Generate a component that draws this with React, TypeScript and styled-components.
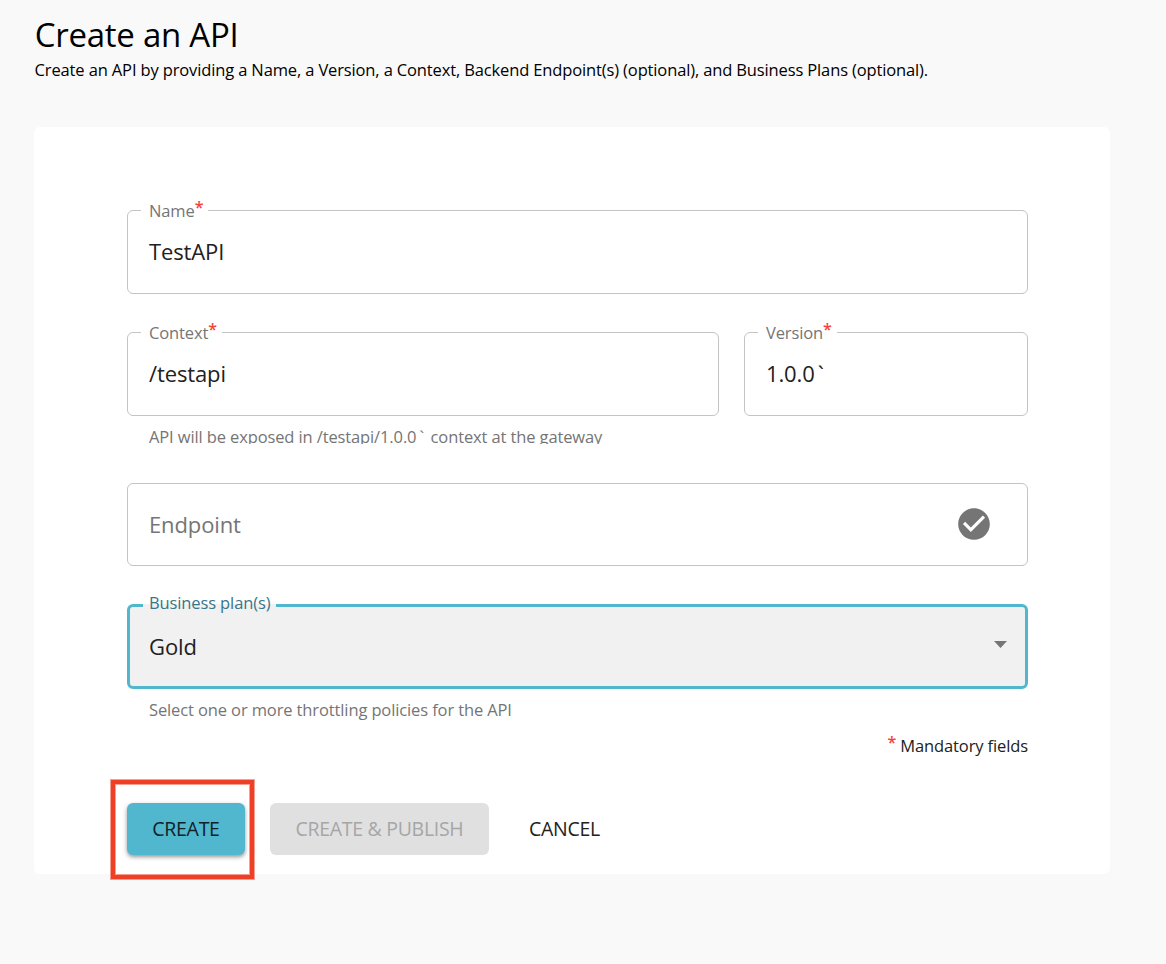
import React from "react";
import styled, { createGlobalStyle } from "styled-components";

const GlobalStyle = createGlobalStyle`
  *, *::before, *::after { box-sizing: border-box; }
  body {
    margin: 0;
    background: #f9f9f9;
    color: #000;
    font-family: "Open Sans", "Noto Sans", sans-serif;
  }
`;

const Page = styled.main`
  min-height: 964px;
  padding: 12px 56px 0 34px;
`;

const Title = styled.h1`
  margin: 0;
  padding-left: 0.7px;
  font-size: 33px;
  font-weight: 400;
  letter-spacing: -0.25px;
  line-height: 46px;
`;

const Subtitle = styled.p`
  margin: 0 0 45px;
  padding-left: 0.6px;
  font-size: 16.5px;
  letter-spacing: -0.137px;
  line-height: 24px;
  white-space: nowrap;
`;

const Card = styled.form`
  display: flex;
  flex-direction: column;
  height: 747px;
  padding: 83px 82px 0 93px;
  border-radius: 6px;
  background: #fff;
`;

const FieldRow = styled.div`
  display: grid;
  grid-template-columns: 592px 284px;
  column-gap: 25px;
  margin-top: 38px;
`;

const Field = styled.div<{ $focused?: boolean; $gap?: number; $height?: number }>`
  position: relative;
  display: flex;
  align-items: center;
  justify-content: space-between;
  height: ${(p) => p.$height ?? 84}px;
  margin-top: ${(p) => p.$gap ?? 0}px;
  padding: ${(p) => (p.$focused ? "0 18px 2px 19px" : "0 34px 2px 21px")};
  border: ${(p) => (p.$focused ? "3px solid #51b7ce" : "1px solid #c4c4c4")};
  border-radius: 6px;
  background: ${(p) => (p.$focused ? "#f1f1f1" : "#fff")};
`;

const Label = styled.label<{ $focused?: boolean }>`
  position: absolute;
  top: ${(p) => (p.$focused ? -16 : -12)}px;
  left: 13px;
  padding: 0 ${(p) => (p.$focused ? 6 : 5)}px 0 ${(p) => (p.$focused ? 6 : 8)}px;
  color: ${(p) => (p.$focused ? "#38758a" : "#757575")};
  font-size: 16.5px;
  letter-spacing: -0.12px;
  line-height: 24px;
  white-space: nowrap;

  &::before {
    content: "";
    position: absolute;
    top: ${(p) => (p.$focused ? 13 : 11)}px;
    left: 0;
    width: 100%;
    height: ${(p) => (p.$focused ? 3 : 1)}px;
    background: ${(p) => (p.$focused ? "#f1f1f1" : "#fff")};
  }
`;

const LabelText = styled.span`
  position: relative;
`;

const Star = styled.span`
  position: relative;
  top: -4px;
  color: #f44336;
  font-size: 16px;
  font-weight: 600;
`;

const Value = styled.span<{ $muted?: boolean }>`
  color: ${(p) => (p.$muted ? "#757575" : "#212121")};
  font-size: 22px;
  letter-spacing: -0.12px;
  line-height: 30px;
`;

const Tick = styled.span`
  margin: 0 2.5px 0 3px;
`;

const Helper = styled.div<{ $clip?: boolean }>`
  height: ${(p) => (p.$clip ? 17 : 24)}px;
  margin: ${(p) => (p.$clip ? "11px 0 0 22px" : "9px 0 0 22px")};
  overflow: hidden;
  color: #757575;
  font-size: 16.5px;
  letter-spacing: -0.12px;
  line-height: ${(p) => (p.$clip ? 20 : 24)}px;
`;

const Mandatory = styled.div`
  margin-top: 12px;
  color: #212121;
  font-size: 16.5px;
  letter-spacing: -0.12px;
  line-height: 24px;
  text-align: right;
`;

const Actions = styled.div`
  display: flex;
  gap: 25px;
  margin-top: 45px;
`;

const Button = styled.button<{ $kind: "primary" | "disabled" | "text" }>`
  width: ${(p) => ({ primary: 118, disabled: 219, text: 101 })[p.$kind]}px;
  height: 52px;
  padding: 0;
  border: 0;
  border-radius: 6px;
  background: ${(p) => ({ primary: "#51b7ce", disabled: "#e0e0e0", text: "transparent" })[p.$kind]};
  box-shadow: ${(p) => (p.$kind === "primary" ? "0 2px 5px rgba(0,0,0,.3), 0 2px 3px rgba(0,0,0,.14)" : "none")};
  color: ${(p) => ({ primary: "#0f2227", disabled: "#a6a6a6", text: "#212121" })[p.$kind]};
  font: 400 19.5px/52px "Open Sans", "Noto Sans", sans-serif;
  letter-spacing: -0.3px;
  text-transform: uppercase;
  white-space: nowrap;
`;

const Highlight = styled.div`
  position: relative;

  &::after {
    content: "";
    position: absolute;
    inset: -23px -9px -24px -16px;
    border: 4px solid #ee4026;
    box-shadow: 0 0 0 1px rgba(238, 64, 38, 0.5), inset 0 0 0 1px rgba(238, 64, 38, 0.5);
    pointer-events: none;
  }
`;

const FieldLabel = ({ text, required, focused }: { text: string; required?: boolean; focused?: boolean }) => (
  <Label $focused={focused}>
    <LabelText>{text}</LabelText>
    {required && <Star>*</Star>}
  </Label>
);

export default function App() {
  return (
    <>
      <GlobalStyle />
      <Page>
        <Title>Create an API</Title>
        <Subtitle>
          Create an API by providing a Name, a Version, a Context, Backend Endpoint(s) (optional), and Business Plans
          (optional).
        </Subtitle>
        <Card>
          <Field>
            <FieldLabel text="Name" required />
            <Value>TestAPI</Value>
          </Field>
          <FieldRow>
            <Field>
              <FieldLabel text="Context" required />
              <Value>/testapi</Value>
            </Field>
            <Field>
              <FieldLabel text="Version" required />
              <Value>
                1.0.0<Tick>`</Tick>
              </Value>
            </Field>
          </FieldRow>
          <Helper $clip>
            API will be exposed in /testapi/1.0.0<Tick>`</Tick> context at the gateway
          </Helper>
          <Field $gap={39} $height={83}>
            <Value $muted>Endpoint</Value>
            <svg width="38" height="38" viewBox="0 0 24 24" fill="#757575">
              <path d="M12 2C6.48 2 2 6.48 2 12s4.48 10 10 10 10-4.48 10-10S17.52 2 12 2zm-2 15l-5-5 1.41-1.41L10 14.17l7.59-7.59L19 8l-9 9z" />
            </svg>
          </Field>
          <Field $focused $gap={38} $height={85}>
            <FieldLabel text="Business plan(s)" focused />
            <Value>Gold</Value>
            <svg width="13" height="10" viewBox="0 0 13 10" fill="#757575">
              <path d="M0 0h13L6.5 7z" />
            </svg>
          </Field>
          <Helper>Select one or more throttling policies for the API</Helper>
          <Mandatory>
            <Star>*</Star> Mandatory fields
          </Mandatory>
          <Actions>
            <Highlight>
              <Button type="button" $kind="primary">Create</Button>
            </Highlight>
            <Button type="button" $kind="disabled" disabled>Create &amp; Publish</Button>
            <Button type="button" $kind="text">Cancel</Button>
          </Actions>
        </Card>
      </Page>
    </>
  );
}
